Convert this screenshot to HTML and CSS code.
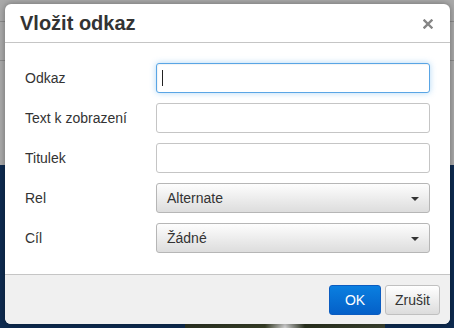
FILE: index.html
```html
<!DOCTYPE html>
<html lang="cs">
<head>
  <meta charset="UTF-8" />
  <title>Vložit odkaz</title>
  <link rel="stylesheet" href="styles.css">
</head>
<body>
  <div class="page">
    <div class="page-top">
      <div class="page-bar"></div>
      <div class="page-bar second"></div>
    </div>
    <div class="page-bottom">
      <div class="photo"></div>
    </div>
  </div>

  <div class="dialog">
    <div class="dialog-head">
      <span class="dialog-title">Vložit odkaz</span>
      <span class="close-btn">
        <svg width="10" height="10" viewBox="0 0 10 10">
          <path d="M1.5 1.5 L8.5 8.5 M8.5 1.5 L1.5 8.5" stroke="#858585" stroke-width="2.4" stroke-linecap="square" />
        </svg>
      </span>
    </div>
    <div class="dialog-body">
      <div class="row">
        <label>Odkaz</label>
        <div class="field focused"><span class="caret"></span></div>
      </div>
      <div class="row">
        <label>Text k zobrazení</label>
        <div class="field"></div>
      </div>
      <div class="row">
        <label>Titulek</label>
        <div class="field"></div>
      </div>
      <div class="row">
        <label>Rel</label>
        <div class="listbox">Alternate<span class="arrow"></span></div>
      </div>
      <div class="row">
        <label>Cíl</label>
        <div class="listbox">Žádné<span class="arrow"></span></div>
      </div>
    </div>
    <div class="dialog-foot">
      <button class="btn primary">OK</button>
      <button class="btn">Zrušit</button>
    </div>
  </div>
</body>
</html>
```

FILE: styles.css
```css
body {
  margin: 0;
  padding: 0;
  font-family: "Liberation Sans", Arial, sans-serif;
  width: 454px;
  height: 328px;
  overflow: hidden;
  position: relative;
}
.page {
  height: 328px;
  display: flex;
  flex-direction: column;
}
.page-top {
  height: 165px;
  background-color: #a9a9a9;
}
.page-bar {
  margin-top: 21px;
  height: 1px;
  background-color: #8a8a8a;
}
.page-bar.second {
  margin-top: 38px;
}
.page-bottom {
  flex: 1;
  background-color: #0e2b50;
  display: flex;
  align-items: flex-end;
  padding-left: 185px;
}
.photo {
  width: 200px;
  height: 6px;
  background: linear-gradient(90deg, #2c3323 0%, #394028 40%, #d8d8d8 50%, #2b321f 60%, #3c4430 100%);
}
.dialog {
  position: absolute;
  left: 5px;
  top: 4px;
  width: 445px;
  height: 320px;
  background-color: #fff;
  border-radius: 6px;
  box-shadow: 0 0 6px rgba(0, 0, 0, 0.35);
  overflow: hidden;
  display: flex;
  flex-direction: column;
}
.dialog-head {
  height: 38px;
  border-bottom: 1px solid #c5c5c5;
  display: flex;
  align-items: center;
  justify-content: space-between;
  padding: 0 17px 0 15px;
}
.dialog-title {
  font-size: 20px;
  font-weight: bold;
  color: #333;
  line-height: 38px;
}
.close-btn {
  display: flex;
  margin-top: 1px;
}
.dialog-body {
  padding: 20px 20px 20px 20px;
  display: flex;
  flex-direction: column;
  gap: 10px;
  flex: 1;
}
.row {
  display: flex;
  align-items: center;
  height: 30px;
}
.row label {
  width: 131px;
  font-size: 14px;
  color: #333;
}
.field {
  width: 274px;
  height: 30px;
  box-sizing: border-box;
  border: 1px solid #c5c5c5;
  border-radius: 3px;
  background-color: #fff;
  display: flex;
  align-items: center;
  padding-left: 5px;
}
.field.focused {
  border-color: #59a5e5;
  box-shadow: inset 1px 1px 1px rgba(0, 0, 0, 0.05), 0 0 6px rgba(82, 168, 236, 0.45);
}
.caret {
  width: 1px;
  height: 16px;
  background-color: #222;
}
.listbox {
  width: 274px;
  height: 30px;
  box-sizing: border-box;
  border: 1px solid #b6b6b6;
  border-radius: 3px;
  background: linear-gradient(#fdfdfd, #dddddd);
  display: flex;
  align-items: center;
  padding-left: 10px;
  font-size: 14px;
  color: #333;
  position: relative;
}
.arrow {
  position: absolute;
  right: 10px;
  top: 13px;
  width: 0;
  height: 0;
  border-left: 4px solid transparent;
  border-right: 4px solid transparent;
  border-top: 4px solid #333;
}
.dialog-foot {
  height: 50px;
  box-sizing: border-box;
  border-top: 1px solid #c5c5c5;
  background-color: #f0f0f0;
  display: flex;
  justify-content: flex-end;
  align-items: flex-start;
  padding: 10px 10px 0 0;
  gap: 4px;
}
.btn {
  height: 30px;
  padding: 0 9px;
  font-family: "Liberation Sans", Arial, sans-serif;
  font-size: 14px;
  color: #333;
  border: 1px solid #c0c0c0;
  border-radius: 3px;
  background: linear-gradient(#ffffff, #dcdcdc);
}
.btn.primary {
  width: 52px;
  color: #fff;
  border-color: #0b5cc0;
  background: linear-gradient(#0a7fe0, #0460c8);
}
```
